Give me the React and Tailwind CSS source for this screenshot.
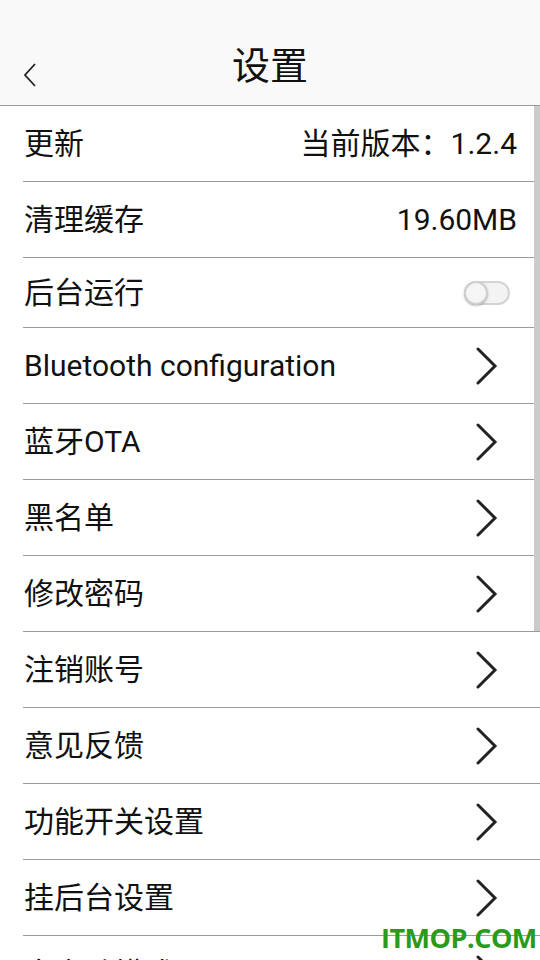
import React from "react";

const Chevron = () => (
  <svg width="24" height="38" viewBox="0 0 24 38" fill="none">
    <path d="M3 2 L20 19 L3 36" stroke="#222" strokeWidth="3" strokeLinecap="round" strokeLinejoin="miter" />
  </svg>
);

const items = [
  "Bluetooth configuration",
  "蓝牙OTA",
  "黑名单",
  "修改密码",
  "注销账号",
  "意见反馈",
  "功能开关设置",
  "挂后台设置",
  "自启动模式",
];

function Row({ label, right, h = "h-[76px]", chevron }) {
  return (
    <div className="pl-[23px]">
      <div className={`${h} border-b border-[#9a9a9a] flex items-center justify-between pl-[1px] ${chevron ? "pr-[41px]" : "pr-[23px]"}`}>
        <span className="text-[30px] text-[#111] leading-none">{label}</span>
        {right}
        {chevron && <Chevron />}
      </div>
    </div>
  );
}

export default function App() {
  return (
    <div className="relative w-[540px] h-[960px] overflow-hidden bg-white" style={{ fontFamily: 'Roboto, "Noto Sans CJK SC", sans-serif' }}>
      <div className="relative h-[106px] bg-[#f9f9f9] border-b border-[#999] flex items-center justify-center pt-[26px]">
        <span className="text-[38px] text-[#111] leading-none">设置</span>
        <svg className="absolute left-[22px] top-[62px]" width="18" height="26" viewBox="0 0 18 26" fill="none">
          <path d="M13 2 L3 13 L13 24" stroke="#222" strokeWidth="1.8" />
        </svg>
      </div>
      <Row label="更新" right={<span className="text-[30px] text-[#111] leading-none">当前版本：1.2.4</span>} />
      <Row label="清理缓存" right={<span className="text-[30px] text-[#111] leading-none">19.60MB</span>} />
      <Row
        label="后台运行"
        h="h-[70px]"
        right={
          <div className="relative w-[46px] h-[24px] rounded-full bg-[#f3f3f3] border-2 border-[#d4d4d4] mr-[7px]">
            <div className="absolute left-[-2px] top-[-2px] w-[24px] h-[24px] rounded-full bg-[#f5f5f5] border-2 border-[#cfcfcf] shadow-[0_1px_2px_rgba(0,0,0,0.25)]" />
          </div>
        }
      />
      {items.map((t) => (
        <Row key={t} label={t} chevron />
      ))}
      <div className="absolute right-0 top-[106px] w-[6px] h-[525px] bg-[#cbcbcb]" />
      <div className="absolute left-[381px] top-[920px] text-[27px] font-bold text-[#2a9a1a] leading-[36px] tracking-[-0.5px]" style={{ fontFamily: '"Open Sans", sans-serif' }}>
        ITMOP.COM
      </div>
    </div>
  );
}
